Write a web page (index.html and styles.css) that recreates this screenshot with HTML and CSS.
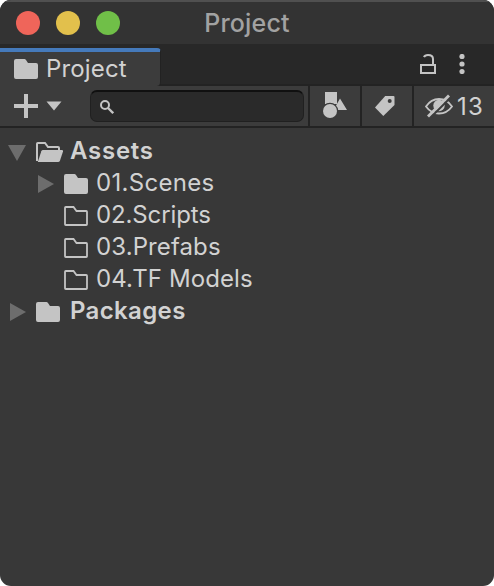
FILE: index.html
```html
<!DOCTYPE html>
<html lang="en">
<head>
<meta charset="utf-8">
<title>Project</title>
<link rel="stylesheet" href="styles.css">
</head>
<body>
<svg class="defs" width="0" height="0">
  <symbol id="folder" viewBox="0 0 24 20"><path d="M2 0H10.5Q11.3 0 12 1L14 4H22Q24 4 24 6V18Q24 20 22 20H2Q0 20 0 18V2Q0 0 2 0Z" fill="#c4c4c4"/></symbol>
  <symbol id="folder-empty" viewBox="0 0 24 20"><path d="M1.8 1H9.5L12.5 5H22.2Q23 5 23 5.8V18.2Q23 19 22.2 19H1.8Q1 19 1 18.2V1.8Q1 1 1.8 1Z" fill="none" stroke="#c4c4c4" stroke-width="1.8"/></symbol>
</svg>
<div class="window">
  <header class="titlebar">
    <div class="lights"><i class="light red"></i><i class="light yellow"></i><i class="light green"></i></div>
    <h1 class="title">Project</h1>
  </header>
  <div class="tabbar">
    <div class="tab"><svg width="24" height="20"><use href="#folder"/></svg><span class="tab-label">Project</span></div>
    <div class="tab-actions">
      <svg width="16" height="20" viewBox="0 0 16 20" fill="none" stroke="#c4c4c4" stroke-width="2"><path d="M4 3.2Q4.8 1 8 1Q13 1 13 5V11M1 11H15V19H1Z"/></svg>
      <svg width="6" height="20" viewBox="0 0 6 20" fill="#c4c4c4"><circle cx="3" cy="2.5" r="2.6"/><circle cx="3" cy="10" r="2.6"/><circle cx="3" cy="17.5" r="2.6"/></svg>
    </div>
  </div>
  <div class="toolbar">
    <div class="add">
      <svg width="24" height="24" viewBox="0 0 24 24"><path d="M12 0V24M0 12H24" stroke="#c4c4c4" stroke-width="4"/></svg>
      <svg width="16" height="10" viewBox="0 0 16 10"><path d="M.5 .5H15.5L8 9.5Z" fill="#c4c4c4"/></svg>
    </div>
    <div class="search"><svg width="14" height="14" viewBox="0 0 14 14" fill="none" stroke="#c4c4c4"><circle cx="5" cy="5" r="4" stroke-width="2"/><path d="M8 8L13.2 13.2" stroke-width="2.3"/></svg></div>
    <div class="tool shapes"><svg width="24" height="28" viewBox="0 0 24 28" fill="#c4c4c4"><path d="M2 0H14V12H2ZM17 6.5L24 18H10.5Z"/><circle cx="7" cy="19" r="8.3" fill="#3c3c3c"/><circle cx="7" cy="19" r="7"/></svg></div>
    <div class="tool tag"><svg width="20" height="20" viewBox="0 0 20 20"><path d="M10.2 0H18.5Q19.5 0 19.5 1V9L8.3 20L0 11.5Z" fill="#c4c4c4"/><circle cx="14.7" cy="5" r="2" fill="#3c3c3c"/></svg></div>
    <div class="tool hidden-items">
      <svg width="28" height="24" viewBox="0 0 28 24"><path d="M1 12.5Q6 5 14 5T27 12.5Q22 19.5 14 19.5T1 12.5Z" fill="none" stroke="#c4c4c4" stroke-width="1.8"/><circle cx="14" cy="11.5" r="5.7" fill="#c4c4c4"/><path d="M5 24L26 3" stroke="#3c3c3c" stroke-width="2.2"/><path d="M3 22.5L24 1.5" stroke="#c4c4c4" stroke-width="2.8"/></svg>
      <span class="count">13</span>
    </div>
  </div>
  <main class="tree">
    <div class="row root open"><svg class="arrow" width="18" height="16"><path d="M0 0H18L9 16Z"/></svg><svg class="icon" width="28" height="20" viewBox="0 0 28 20"><path d="M1 19V1.8Q1 1 1.8 1H9L12 5H22Q23 5 23 6V8" fill="none" stroke="#c4c4c4" stroke-width="2"/><path d="M7 8H26Q27.5 8 27 9.5L24 18.5Q23.5 20 22 20H1.8L5.3 9.3Q5.8 8 7 8Z" fill="#c4c4c4"/></svg><span class="assets">Assets</span></div>
    <div class="row child"><svg class="arrow" width="16" height="18"><path d="M0 0V18L16 9Z"/></svg><svg class="icon" width="24" height="20"><use href="#folder"/></svg><span>01.Scenes</span></div>
    <div class="row child leaf"><svg class="icon" width="24" height="20"><use href="#folder-empty"/></svg><span class="snug">02.Scripts</span></div>
    <div class="row child leaf"><svg class="icon" width="24" height="20"><use href="#folder-empty"/></svg><span class="even">03.Prefabs</span></div>
    <div class="row child leaf"><svg class="icon" width="24" height="20"><use href="#folder-empty"/></svg><span class="even">04.TF Models</span></div>
    <div class="row root closed"><svg class="arrow" width="16" height="18"><path d="M0 0V18L16 9Z"/></svg><svg class="icon" width="24" height="20"><use href="#folder"/></svg><span>Packages</span></div>
  </main>
</div>
</body>
</html>
```

FILE: styles.css
```css
* { box-sizing: border-box; }
body { margin: 0; background: #fff; font-family: Inter, sans-serif; font-size: 24px; font-weight: 380; color: #d2d2d2; }
svg { display: block; flex: none; }
.defs { position: absolute; }
.window { width: 494px; height: 586px; display: flex; flex-direction: column; background: #383838; border-radius: 11px; overflow: hidden; }
.titlebar { height: 44px; display: grid; grid-template-columns: 1fr auto 1fr; align-items: center; background: #333; border-top: 2px solid #505050; }
.lights { display: flex; gap: 16px; padding-left: 16px; }
.light { width: 24px; height: 24px; border-radius: 50%; }
.red { background: #ef655a; }
.yellow { background: #e2c04c; }
.green { background: #70bf48; }
.title { margin: 0; font-size: 25px; font-weight: 450; line-height: 42px; letter-spacing: .2px; color: #a2a2a2; }
.tabbar { height: 42px; display: flex; justify-content: space-between; align-items: flex-start; background: #282828; border-bottom: 2px solid #232323; padding-top: 4px; }
.tab { width: 161px; height: 38px; display: flex; align-items: center; gap: 8px; padding-left: 14px; background: #3c3c3c; border-top: 4px solid #457abb; border-right: 1px solid #222; border-radius: 0 4px 4px 0; }
.tab-label { line-height: 34px; letter-spacing: .15px; }
.tab-actions { display: flex; gap: 23px; padding: 6px 29px 0 0; }
.toolbar { height: 42px; display: flex; background: #3c3c3c; border-bottom: 2px solid #232323; }
.add { width: 90px; display: flex; align-items: center; gap: 8px; padding-left: 14px; }
.search { width: 214px; height: 32px; margin-top: 4px; padding: 8px 0 0 9px; background: #2a2a2a; border: 1px solid #202020; border-top: 2px solid #101010; border-radius: 7px; }
.tool { border-left: 2px solid #232323; display: flex; align-items: center; }
.shapes { width: 52px; margin-left: 4px; padding-left: 13px; }
.tag { width: 52px; padding-left: 13px; }
.hidden-items { width: 82px; padding-left: 11px; gap: 4px; }
.count { letter-spacing: 1.2px; }
.tree { flex: 1; padding-top: 7px; }
.row { height: 32px; display: flex; align-items: center; line-height: 32px; letter-spacing: .3px; }
.root { font-weight: 600; padding-left: 8px; letter-spacing: .35px; }
.root .icon { margin: 2px 6px 0 10px; }
.assets { letter-spacing: .75px; }
.child { padding-left: 38px; }
.child .icon { margin: 2px 8px 0 10px; }
.leaf { padding-left: 54px; }
.snug { letter-spacing: -.12px; }
.even { letter-spacing: .1px; }
.closed { padding-left: 10px; }
.closed .icon { margin-right: 10px; }
.arrow { fill: #6d6d6d; }
.row .arrow { margin-top: 2px; }
.open .arrow { margin-top: 4px; }
```
